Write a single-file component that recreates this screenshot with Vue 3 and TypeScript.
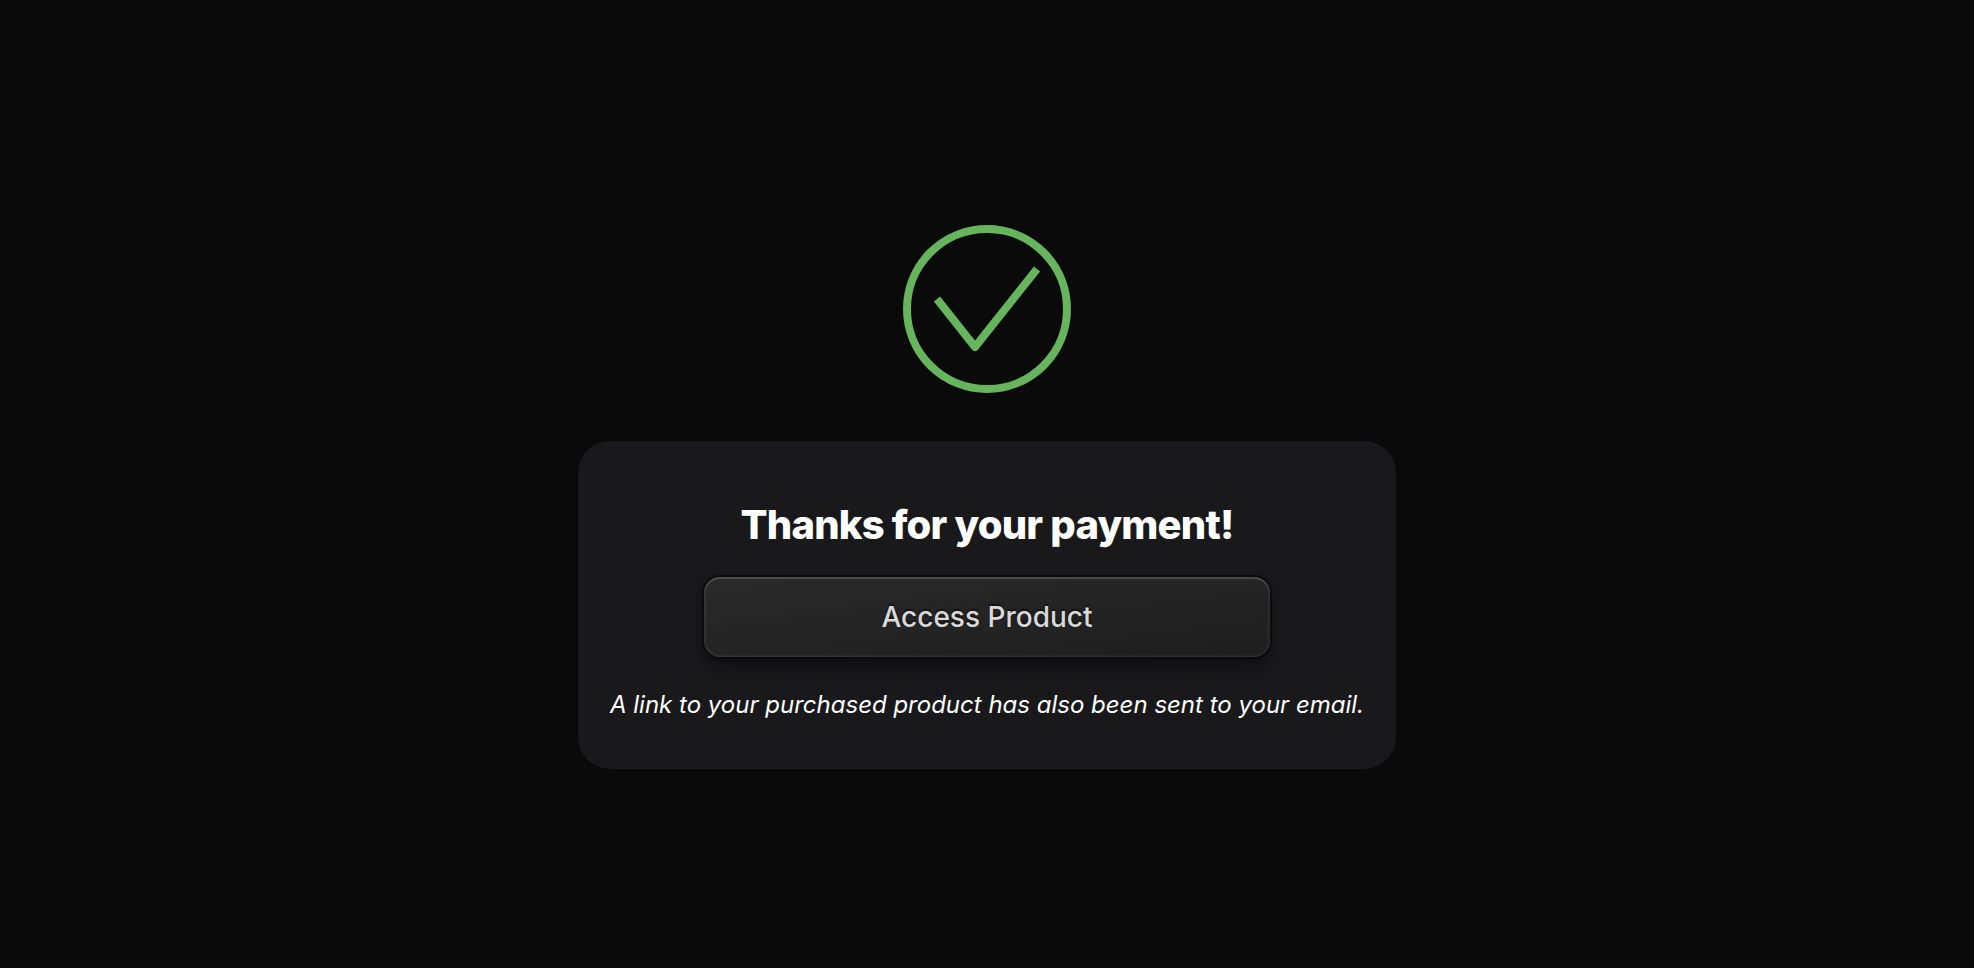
<script setup lang="ts">
const title: string = 'Thanks for your payment!'
const action: string = 'Access Product'
const note: string = 'A link to your purchased product has also been sent to your email.'
</script>

<template>
  <main class="page">
    <svg class="success" viewBox="0 0 168 168" fill="none" aria-hidden="true">
      <circle cx="84" cy="84" r="80" />
      <path d="M34 74 L72 122 L134 44" stroke-linejoin="round" />
    </svg>
    <section class="card">
      <h1 class="title">{{ title }}</h1>
      <button class="access" type="button">{{ action }}</button>
      <p class="note">{{ note }}</p>
    </section>
  </main>
</template>

<style>
body {
  margin: 0;
  background: #0a0a0a;
}
</style>

<style scoped>
.page {
  box-sizing: border-box;
  min-height: 100vh;
  padding-top: 26px;
  display: flex;
  flex-direction: column;
  align-items: center;
  justify-content: center;
  gap: 48px;
  color: #fff;
  font-family: Inter, "Liberation Sans", sans-serif;
}

.success {
  width: 168px;
  height: 168px;
  stroke: #66b45b;
  stroke-width: 8;
}

.card {
  display: flex;
  flex-direction: column;
  align-items: center;
  gap: 32px;
  padding: 64px 32px 48px;
  border-radius: 32px;
  background: #19191b;
}

.title {
  margin: 0;
  font-size: 40px;
  line-height: 40px;
  font-weight: 800;
  letter-spacing: -0.02em;
}

.access {
  width: 75%;
  height: 80px;
  padding: 0 32px;
  border: 0;
  border-radius: 16px;
  background: linear-gradient(173deg, #2a2a2a, #1e1e1e);
  box-shadow:
    0 0 0 2px #0c0c0d,
    0 4px 8px rgba(0, 0, 0, 0.3),
    0 16px 24px -4px rgba(0, 0, 0, 0.25),
    inset 0 2px 1px rgba(255, 255, 255, 0.14),
    inset 0 -1px 1px rgba(255, 255, 255, 0.04),
    inset 0 0 2px 2px rgba(255, 255, 255, 0.05);
  color: #d9d9d9;
  font-family: inherit;
  font-size: 28px;
  line-height: 40px;
  font-weight: 500;
  text-shadow: 0 -2px 2px rgba(0, 0, 0, 0.5);
  cursor: pointer;
}

.note {
  margin: 0;
  font-size: 24px;
  line-height: 32px;
  font-style: italic;
  font-weight: 400;
}
</style>
